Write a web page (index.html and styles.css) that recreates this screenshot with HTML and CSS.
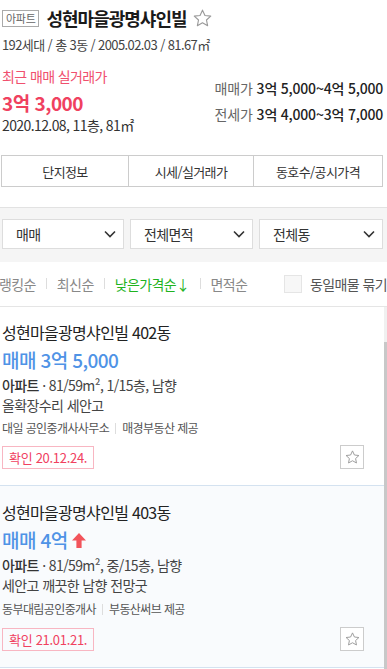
FILE: index.html
```html
<!DOCTYPE html>
<html lang="ko">
<head>
<meta charset="utf-8">
<title>성현마을광명샤인빌</title>
<link rel="stylesheet" href="styles.css">
</head>
<body>
<header class="summary">
  <div class="title-row">
    <span class="badge">아파트</span>
    <h1 class="title">성현마을광명샤인빌</h1>
    <svg class="fav" width="19" height="18" viewBox="0 0 20 19"><path d="M10 1.2l2.6 5.6 6.1.7-4.5 4.1 1.2 6-5.4-3-5.4 3 1.2-6L1.3 7.5l6.1-.7z" fill="none" stroke="#9a9a9a" stroke-width="1.2" stroke-linejoin="round"/></svg>
  </div>
  <p class="meta">192세대 / 총 3동 / 2005.02.03 / 81.67㎡</p>
  <div class="price-row">
    <div class="recent">
      <p class="recent-label">최근 매매 실거래가</p>
      <p class="recent-price">3억 3,000</p>
      <p class="recent-info">2020.12.08, 11층, 81㎡</p>
    </div>
    <dl class="ranges">
      <div class="range"><dt>매매가</dt><dd>3억 5,000~4억 5,000</dd></div>
      <div class="range"><dt>전세가</dt><dd>3억 4,000~3억 7,000</dd></div>
    </dl>
  </div>
  <nav class="tabs">
    <a class="tab">단지정보</a>
    <a class="tab">시세/실거래가</a>
    <a class="tab">동호수/공시가격</a>
  </nav>
</header>

<section class="filters">
  <div class="select">매매<svg width="12" height="8" viewBox="0 0 12 8"><path d="M1 1.5l5 5 5-5" fill="none" stroke="#333" stroke-width="1.6"/></svg></div>
  <div class="select">전체면적<svg width="12" height="8" viewBox="0 0 12 8"><path d="M1 1.5l5 5 5-5" fill="none" stroke="#333" stroke-width="1.6"/></svg></div>
  <div class="select">전체동<svg width="12" height="8" viewBox="0 0 12 8"><path d="M1 1.5l5 5 5-5" fill="none" stroke="#333" stroke-width="1.6"/></svg></div>
</section>

<div class="sorts">
  <div class="sort-list">
    <span class="sort">랭킹순</span>
    <span class="sep"></span>
    <span class="sort">최신순</span>
    <span class="sep"></span>
    <span class="sort active">낮은가격순↓</span>
    <span class="sep"></span>
    <span class="sort">면적순</span>
  </div>
  <label class="group"><span class="check"></span>동일매물 묶기</label>
</div>

<div class="list-wrap">
  <div class="list">
    <article class="item">
      <h2 class="item-title">성현마을광명샤인빌 402동</h2>
      <p class="item-price">매매 3억 5,000</p>
      <p class="item-spec"><b>아파트</b> · 81/59m², 1/15층, 남향</p>
      <p class="item-desc">올확장수리 세안고</p>
      <p class="item-agent"><span>대일 공인중개사사무소</span><span class="sep"></span><span>매경부동산 제공</span></p>
      <div class="item-foot">
        <span class="confirm">확인 20.12.24.</span>
        <span class="star-box"><svg width="15" height="14" viewBox="0 0 20 19"><path d="M10 1.2l2.6 5.6 6.1.7-4.5 4.1 1.2 6-5.4-3-5.4 3 1.2-6L1.3 7.5l6.1-.7z" fill="none" stroke="#9a9a9a" stroke-width="1.3" stroke-linejoin="round"/></svg></span>
      </div>
    </article>
    <article class="item alt">
      <h2 class="item-title">성현마을광명샤인빌 403동</h2>
      <p class="item-price">매매 4억<svg class="up" width="14" height="15" viewBox="0 0 14 15"><path d="M7 0L14 7.5H9.6V15H4.4V7.5H0z" fill="#f2545b"/></svg></p>
      <p class="item-spec"><b>아파트</b> · 81/59m², 중/15층, 남향</p>
      <p class="item-desc">세안고 깨끗한 남향 전망굿</p>
      <p class="item-agent"><span>동부대림공인중개사</span><span class="sep"></span><span>부동산써브 제공</span></p>
      <div class="item-foot">
        <span class="confirm">확인 21.01.21.</span>
        <span class="star-box"><svg width="15" height="14" viewBox="0 0 20 19"><path d="M10 1.2l2.6 5.6 6.1.7-4.5 4.1 1.2 6-5.4-3-5.4 3 1.2-6L1.3 7.5l6.1-.7z" fill="none" stroke="#9a9a9a" stroke-width="1.3" stroke-linejoin="round"/></svg></span>
      </div>
    </article>
  </div>
  <div class="scrollbar"><div class="thumb"></div></div>
</div>
</body>
</html>
```

FILE: styles.css
```css
* { box-sizing: border-box; }
html, body { margin: 0; padding: 0; background: #fff; }
body {
  font-family: "Noto Sans CJK KR", "Noto Sans", sans-serif;
  color: #222;
  letter-spacing: -0.6px;
  overflow: hidden;
  height: 669px;
  display: flex;
  flex-direction: column;
}
p, h1, h2, dl, dd, dt { margin: 0; padding: 0; font-weight: normal; }

.summary { padding: 7px 0 0 2px; flex: none; }
.title-row { display: flex; align-items: center; height: 22px; }
.badge {
  font-size: 11px; line-height: 15px; color: #666;
  border: 1px solid #aaa; padding: 0 3px; letter-spacing: -0.3px;
}
.title { font-size: 18px; font-weight: bold; line-height: 22px; margin-left: 7px; letter-spacing: -1px; color: #1a1a1a; }
.fav { margin-left: 6px; }
.meta { margin-top: 6px; font-size: 13px; line-height: 20px; color: #444; }

.price-row { display: flex; justify-content: space-between; margin-top: 11px; padding-right: 4px; }
.recent-label { font-size: 14px; line-height: 20px; color: #f0506e; }
.recent-price { margin-top: 5px; font-size: 19px; line-height: 24px; font-weight: bold; color: #f0415f; letter-spacing: -0.5px; }
.recent-info { font-size: 14px; line-height: 20px; color: #333; }
.ranges { padding-top: 9px; }
.range { display: flex; justify-content: flex-end; gap: 4px; font-size: 14px; line-height: 26px; letter-spacing: -0.2px; }
.range dt { color: #666; }
.range dd { color: #222; font-weight: 500; }

.tabs {
  display: grid; grid-template-columns: 126px 125px 1fr;
  margin: 20px 4px 0 -1px; border: 1px solid #ccc; height: 32px;
}
.tab {
  display: flex; align-items: center; justify-content: center;
  font-size: 13px; color: #333;
}
.tab + .tab { border-left: 1px solid #ccc; }

.filters {
  flex: none;
  margin-top: 20px; border-top: 1px solid #e2e2e2; background: #f5f5f5;
  display: grid; grid-template-columns: 122px 123px 124px; gap: 6px;
  padding: 11px 5px 13px 2px; height: 55px;
}
.select {
  background: #fff; border: 1px solid #ddd; height: 30px;
  display: flex; align-items: center; justify-content: space-between;
  padding: 0 7px 0 13px; font-size: 14px; color: #333;
}

.sorts {
  flex: none;
  display: flex; align-items: center; justify-content: space-between;
  height: 45px; border-bottom: 1px solid #e5e5e5; padding: 0 0 1px 0;
}
.sort-list { display: flex; align-items: center; margin-left: -1px; }
.sort { font-size: 14px; color: #888; }
.sort.active { color: #1fb31f; }
.sorts .sep, .item-agent .sep {
  display: inline-block; width: 1px; height: 11px; background: #ddd; margin: 0 10px;
}
.group { display: flex; align-items: center; font-size: 14px; color: #555; }
.check {
  width: 18px; height: 18px; border: 1px solid #e5e5e5; background: #f7f7f7; margin-right: 8px;
}

.list-wrap { display: flex; flex: 1; min-height: 0; overflow: hidden; }
.list { flex: 1; }
.scrollbar { width: 3px; background: #f0f0f0; padding-top: 35px; }
.thumb { height: 400px; background: #c8c8c8; }

.item { padding: 14px 0 16px 2px; }
.item.alt { background: #f9fbfd; border-top: 1px solid #d4e2f0; border-bottom: 1px solid #d4e2f0; padding-top: 15px; }
.item-title { font-size: 16px; line-height: 22px; color: #222; letter-spacing: -0.7px; }
.item-price { margin-top: 4px; font-size: 19px; line-height: 26px; color: #4f93e6; font-weight: 500; display: flex; align-items: center; }
.item-price .up { margin-left: 4px; }
.item-spec { margin-top: 2px; font-size: 14px; line-height: 20px; color: #444; }
.item-spec b { font-weight: 500; color: #333; }
.item-desc { font-size: 14px; line-height: 20px; color: #444; }
.item-agent { margin-top: 4px; font-size: 12px; line-height: 18px; color: #555; display: flex; align-items: center; }
.item-agent .sep { margin: 0 6px; }
.item.alt .item-agent { margin-top: 5px; }
.item-foot { margin-top: 8px; display: flex; justify-content: space-between; align-items: center; padding-right: 20px; }
.item.alt .item-foot { margin-top: 9px; }
.confirm {
  font-size: 13px; line-height: 21px; color: #f0415f; border: 1px solid #f8b6c2;
  padding: 0 6px; letter-spacing: -0.3px;
}
.star-box {
  width: 24px; height: 24px; border: 1px solid #ccc;
  display: flex; align-items: center; justify-content: center; background: #fff;
}
```
